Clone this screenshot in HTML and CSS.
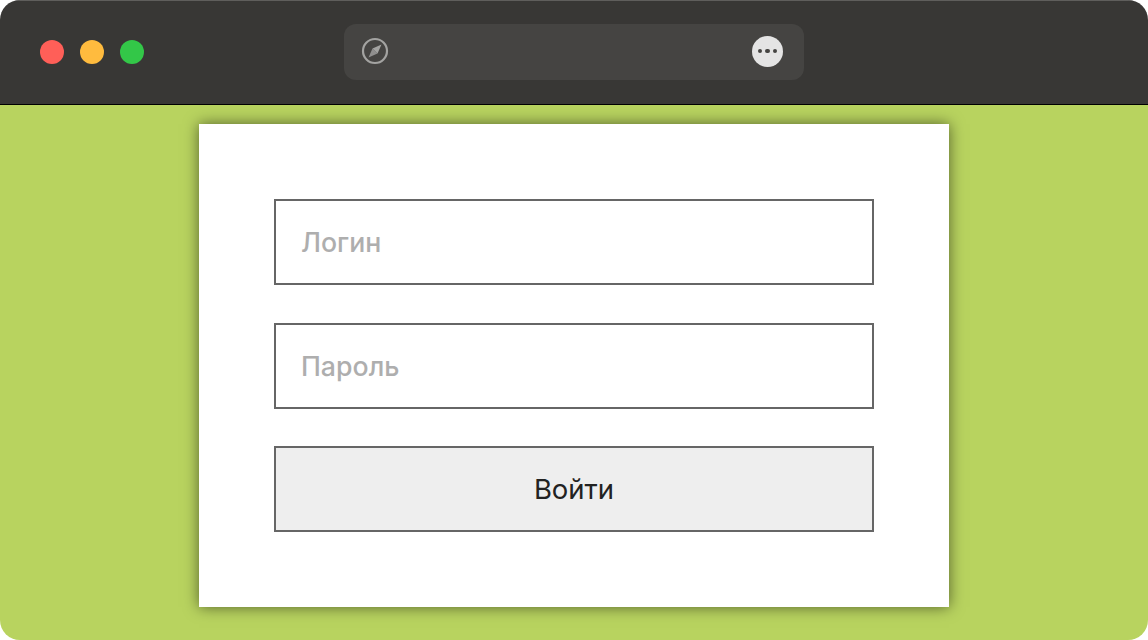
FILE: index.html
```html
<!DOCTYPE html>
<html lang="ru">
<head>
    <meta charset="utf-8">
    <title>Вход</title>
    <link rel="stylesheet" href="styles.css">
</head>
<body>

<div class="window">
    <div class="titlebar">
        <div class="lights">
            <span class="light light-red"></span>
            <span class="light light-yellow"></span>
            <span class="light light-green"></span>
        </div>
        <div class="addressbar">
            <svg class="compass" width="28" height="28" viewBox="0 0 28 28">
                <circle cx="14" cy="14" r="12" fill="none" stroke="#a3a3a1" stroke-width="2.2"/>
                <path d="M20.5 7.5 L16.5 16.5 L11.5 11.5 Z" fill="#a3a3a1"/>
                <path d="M7.5 20.5 L11.5 11.5 L16.5 16.5 Z" fill="#a3a3a1" opacity="0.8"/>
            </svg>
            <div class="more">
                <span class="dot"></span>
                <span class="dot"></span>
                <span class="dot"></span>
            </div>
        </div>
    </div>
    <div class="content">
        <form class="card">
            <input class="field" type="text" placeholder="Логин">
            <input class="field" type="password" placeholder="Пароль">
            <button class="submit" type="button">Войти</button>
        </form>
    </div>
</div>

</body>
</html>
```

FILE: styles.css
```css
html, body {
    margin: 0;
    height: 100%;
    background: #fff;
}

.window {
    width: 1148px;
    height: 640px;
    border-radius: 20px;
    overflow: hidden;
    display: flex;
    flex-direction: column;
    font-family: Inter, "Noto Sans", sans-serif;
}

.titlebar {
    height: 105px;
    flex: none;
    box-sizing: border-box;
    background: #383735;
    border-top: 1px solid #5f5e5c;
    border-bottom: 1px solid #000;
    position: relative;
    display: flex;
    justify-content: center;
    align-items: flex-start;
    padding-top: 23px;
}

.lights {
    position: absolute;
    left: 40px;
    top: 39px;
    display: flex;
    gap: 16px;
}

.light {
    width: 24px;
    height: 24px;
    border-radius: 50%;
}

.light-red { background: #ff5f58; }
.light-yellow { background: #ffbb3e; }
.light-green { background: #33c748; }

.addressbar {
    width: 460px;
    height: 56px;
    box-sizing: border-box;
    background: #454442;
    border-radius: 12px;
    padding: 0 21px 2px 17px;
    display: flex;
    align-items: center;
    justify-content: space-between;
}

.more {
    width: 31px;
    height: 31px;
    border-radius: 50%;
    background: #e4e4e4;
    display: flex;
    align-items: center;
    justify-content: center;
    gap: 3px;
}

.dot {
    width: 4.5px;
    height: 4.5px;
    border-radius: 50%;
    background: #454442;
}

.content {
    flex: 1;
    background: #b8d35f;
    display: flex;
    justify-content: center;
    align-items: flex-start;
    padding-top: 19px;
}

.card {
    width: 750px;
    height: 483px;
    box-sizing: border-box;
    background: #fff;
    box-shadow: 0 0 14px rgba(0, 0, 0, 0.55);
    padding: 75px;
    display: flex;
    flex-direction: column;
    gap: 37.5px;
}

.field, .submit {
    width: 600px;
    height: 86px;
    box-sizing: border-box;
    border: 2px solid #666;
    border-radius: 0;
    margin: 0;
    font-family: inherit;
    outline: none;
}

.field {
    background: #fff;
    padding: 0 25px;
    font-size: 26.7px;
    font-weight: 500;
}

.field::placeholder {
    color: #aeaeae;
    opacity: 1;
}

.submit {
    background: #eee;
    color: #222;
    font-size: 27.5px;
    font-weight: 400;
}
```
